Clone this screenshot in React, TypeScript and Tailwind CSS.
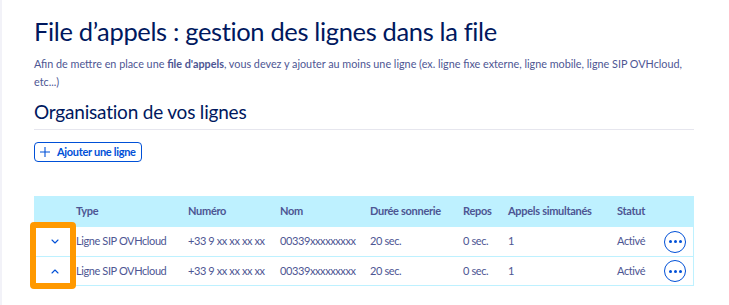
import React from 'react';

const rows = [
  { dir: 'down', type: 'Ligne SIP OVHcloud', numero: '+33 9 xx xx xx xx', nom: '00339xxxxxxxxx', duree: '20 sec.', repos: '0 sec.', appels: '1', statut: 'Activé' },
  { dir: 'up', type: 'Ligne SIP OVHcloud', numero: '+33 9 xx xx xx xx', nom: '00339xxxxxxxxx', duree: '20 sec.', repos: '0 sec.', appels: '1', statut: 'Activé' },
];

const cols = 'grid grid-cols-[42px_112px_92px_90px_93px_45px_109px_47px_1fr]';

function Chevron({ dir }: { dir: string }) {
  return (
    <svg width="8" height="5" viewBox="0 0 8 5" fill="none" stroke="#0050d7" strokeWidth="1.1" strokeLinecap="round" strokeLinejoin="round">
      {dir === 'down' ? <path d="M1 1l3 3 3-3" /> : <path d="M1 4l3-3 3 3" />}
    </svg>
  );
}

function MoreButton() {
  return (
    <button className="flex h-[22px] w-[22px] items-center justify-center gap-[2px] rounded-full border-[1.5px] border-[#0050d7] bg-white">
      <span className="h-[3px] w-[3px] rounded-full bg-[#0050d7]" />
      <span className="h-[3px] w-[3px] rounded-full bg-[#0050d7]" />
      <span className="h-[3px] w-[3px] rounded-full bg-[#0050d7]" />
    </button>
  );
}

export default function App() {
  return (
    <div className="min-h-[305px] w-[729px] border-l-2 border-[#f2f2f8] bg-white font-['Lato',sans-serif] text-[#4d5693]">
      <div className="relative pl-[32px] pr-[35px] pt-[15px]">
        <h1 className="text-[25.5px] leading-[32px] tracking-[-0.35px] text-[#00185e]">File d’appels : gestion des lignes dans la file</h1>
        <p className="mt-[8px] text-[10.8px] leading-[18px]">
          Afin de mettre en place une <b className="font-bold">file d'appels</b>, vous devez y ajouter au moins une ligne (ex. ligne fixe externe, ligne mobile, ligne SIP OVHcloud, etc...)
        </p>
        <h2 className="mt-[8px] border-b border-[#e6e6ee] pb-[4px] text-[19px] leading-[26px] tracking-[-0.2px] text-[#00185e]">Organisation de vos lignes</h2>

        <button className="mt-[12px] flex h-[20px] items-center gap-[7px] rounded-[4px] border border-[#0050d7] px-[5px] text-[11px] font-bold tracking-[-0.3px] text-[#0050d7]">
          <svg width="10" height="10" viewBox="0 0 10 10" stroke="#0050d7" strokeWidth="1.1">
            <path d="M5 0v10M0 5h10" />
          </svg>
          Ajouter une ligne
        </button>

        <div className="mt-[34px] border-b border-r border-[#bef1ff]">
          <div className={`${cols} h-[31px] items-center bg-[#bef1ff] text-[11px] font-bold tracking-[-0.3px]`}>
            <span />
            <span>Type</span>
            <span>Numéro</span>
            <span>Nom</span>
            <span>Durée sonnerie</span>
            <span>Repos</span>
            <span>Appels simultanés</span>
            <span>Statut</span>
            <span />
          </div>
          {rows.map((r, i) => (
            <div key={i} className={`${cols} h-[29px] items-center text-[11px] tracking-[-0.4px] ${i > 0 ? 'border-t border-[#bef1ff]' : ''}`}>
              <span className="flex justify-center">
                <Chevron dir={r.dir} />
              </span>
              <span>{r.type}</span>
              <span>{r.numero}</span>
              <span>{r.nom}</span>
              <span>{r.duree}</span>
              <span>{r.repos}</span>
              <span>{r.appels}</span>
              <span>{r.statut}</span>
              <span>
                <MoreButton />
              </span>
            </div>
          ))}
        </div>

        <div className="pointer-events-none absolute left-[28px] top-[222px] h-[67px] w-[46px] rounded-[4px] border-[6px] border-[#ff9900]" />
      </div>
    </div>
  );
}
